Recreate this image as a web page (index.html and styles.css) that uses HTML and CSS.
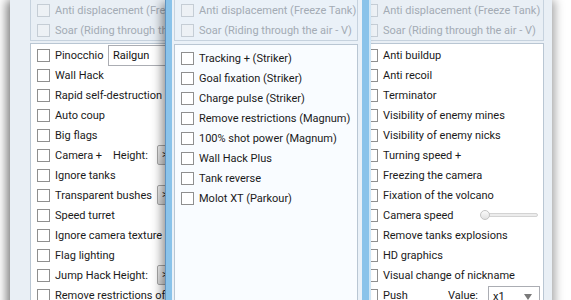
FILE: index.html
```html
<!DOCTYPE html>
<html lang="en">
<head>
    <meta charset="UTF-8">
    <title>Options</title>
    <link rel="stylesheet" href="styles.css">
</head>
<body>
    <div class="desk">
        <div class="win win-left">
            <div class="grp">
                <div class="row off"><span class="chk"></span>Anti displacement (Freeze Tank)</div>
                <div class="row off"><span class="chk"></span>Soar (Riding through the air - V)</div>
            </div>
            <div class="list">
                <div class="row"><span class="chk"></span><span class="t-pin">Pinocchio</span><span class="combo combo-rail">Railgun</span></div>
                <div class="row"><span class="chk"></span>Wall Hack</div>
                <div class="row"><span class="chk"></span>Rapid self-destruction</div>
                <div class="row"><span class="chk"></span>Auto coup</div>
                <div class="row"><span class="chk"></span>Big flags</div>
                <div class="row"><span class="chk"></span><span class="t-cam">Camera +</span><span class="t-h">Height:</span><span class="spin">&gt;</span></div>
                <div class="row"><span class="chk"></span>Ignore tanks</div>
                <div class="row"><span class="chk"></span><span class="t-bush">Transparent bushes</span><span class="spin">&gt;</span></div>
                <div class="row"><span class="chk"></span>Speed turret</div>
                <div class="row"><span class="chk"></span>Ignore camera texture</div>
                <div class="row"><span class="chk"></span>Flag lighting</div>
                <div class="row"><span class="chk"></span><span class="t-cam">Jump Hack</span><span class="t-h">Height:</span><span class="spin">&gt;</span></div>
                <div class="row"><span class="chk"></span>Remove restrictions of</div>
            </div>
        </div>

        <div class="win win-right">
            <div class="grp">
                <div class="row off"><span class="chk"></span>Anti displacement (Freeze Tank)</div>
                <div class="row off"><span class="chk"></span>Soar (Riding through the air - V)</div>
            </div>
            <div class="list">
                <div class="row"><span class="chk"></span>Anti buildup</div>
                <div class="row"><span class="chk"></span>Anti recoil</div>
                <div class="row"><span class="chk"></span>Terminator</div>
                <div class="row"><span class="chk"></span>Visibility of enemy mines</div>
                <div class="row"><span class="chk"></span>Visibility of enemy nicks</div>
                <div class="row"><span class="chk"></span>Turning speed +</div>
                <div class="row"><span class="chk"></span>Freezing the camera</div>
                <div class="row"><span class="chk"></span>Fixation of the volcano</div>
                <div class="row"><span class="chk"></span><span class="t-speed">Camera speed</span><span class="slider"><span class="track"></span><span class="thumb"></span></span></div>
                <div class="row"><span class="chk"></span>Remove tanks explosions</div>
                <div class="row"><span class="chk"></span>HD graphics</div>
                <div class="row"><span class="chk"></span>Visual change of nickname</div>
                <div class="row"><span class="chk"></span><span class="t-push">Push</span><span class="t-val">Value:</span><span class="combo combo-val">x1<span class="arrow"></span></span></div>
            </div>
        </div>

        <div class="win win-mid">
            <div class="grp">
                <div class="row off"><span class="chk"></span>Anti displacement (Freeze Tank)</div>
                <div class="row off"><span class="chk"></span>Soar (Riding through the air - V)</div>
            </div>
            <div class="list">
                <div class="row"><span class="chk"></span>Tracking + (Striker)</div>
                <div class="row"><span class="chk"></span>Goal fixation (Striker)</div>
                <div class="row"><span class="chk"></span>Charge pulse (Striker)</div>
                <div class="row"><span class="chk"></span>Remove restrictions (Magnum)</div>
                <div class="row"><span class="chk"></span>100% shot power (Magnum)</div>
                <div class="row"><span class="chk"></span>Wall Hack Plus</div>
                <div class="row"><span class="chk"></span>Tank reverse</div>
                <div class="row"><span class="chk"></span>Molot XT (Parkour)</div>
            </div>
        </div>
    </div>
</body>
</html>
```

FILE: styles.css
```css
body {
    margin: 0;
    background: #fff;
    font-family: Roboto, "Liberation Sans", sans-serif;
    font-size: 11px;
    color: #1a1a1a;
}
.desk {
    position: relative;
    width: 571px;
    height: 300px;
    overflow: hidden;
}
.win {
    position: absolute;
    top: 0;
    height: 330px;
    box-sizing: border-box;
    display: flex;
    flex-direction: column;
    background: #e9eff5;
}
.win-left {
    left: 10px;
    width: 160px;
    padding-left: 20px;
    overflow: hidden;
    box-shadow: -3px 0 10px rgba(0, 0, 0, 0.55);
}
.win-right {
    left: 340px;
    width: 212px;
    padding-left: 18px;
    padding-right: 8px;
    box-shadow: 3px 0 9px rgba(0, 0, 0, 0.35);
}
.win-mid {
    left: 165px;
    width: 206px;
    z-index: 2;
    padding-left: 9px;
    padding-right: 13px;
    background: linear-gradient(to right,
        #5f93c0 0 1px, #8ac3ea 1px 7px, #eaf1f8 7px calc(100% - 9px),
        #8ac3ea calc(100% - 9px) calc(100% - 2px), #cfe6f6 calc(100% - 2px));
    box-shadow: -6px 0 10px -3px rgba(0, 0, 0, 0.45);
}
.grp {
    flex: none;
    height: 40px;
    padding-left: 6px;
    border: 1px solid #c6d2de;
    border-top: 0;
}
.list {
    flex: 1;
    margin-top: 2px;
    padding: 1px 0 0 6px;
    background: #fff;
    border: 1px solid #b9c6d3;
}
.win-left .grp,
.win-left .list {
    border-right: 0;
}
.win-mid .list {
    margin-top: 3px;
    padding-top: 3px;
    background: #f9fcff;
}
.row {
    display: flex;
    align-items: center;
    height: 20px;
    white-space: nowrap;
}
.chk {
    flex: none;
    width: 13px;
    height: 13px;
    box-sizing: border-box;
    margin-right: 5px;
    border: 1px solid #8f8f8f;
    background: #fff;
}
.off {
    color: #a3abb4;
}
.off .chk {
    border-color: #c5cdd5;
    background: #edf1f5;
}
.t-pin, .t-cam, .t-h, .t-bush, .t-speed, .t-push, .t-val {
    flex: none;
}
.t-pin { width: 53px; }
.t-cam { width: 58px; }
.t-h { width: 44px; }
.t-bush { width: 102px; }
.t-speed { width: 97px; }
.t-push { width: 65px; }
.t-val { width: 40px; }
.combo {
    position: relative;
    flex: none;
    box-sizing: border-box;
    height: 21px;
    line-height: 19px;
    padding-left: 4px;
    border: 1px solid #abadb3;
    background: #fff;
    color: #111;
}
.combo-rail {
    width: 80px;
}
.combo-val {
    width: 52px;
    height: 22px;
    margin-top: 3px;
}
.arrow {
    position: absolute;
    right: 7px;
    top: 7px;
    border-left: 4px solid transparent;
    border-right: 4px solid transparent;
    border-top: 6px solid #7a7a7a;
}
.spin {
    flex: none;
    box-sizing: border-box;
    width: 24px;
    height: 20px;
    line-height: 18px;
    padding-left: 4px;
    border: 1px solid #a9a9a9;
    border-radius: 2px;
    background: linear-gradient(#f4f4f4, #dcdcdc);
    font-size: 10px;
}
.slider {
    position: relative;
    flex: none;
    width: 58px;
    height: 10px;
}
.track {
    position: absolute;
    left: 4px;
    right: 0;
    top: 3px;
    height: 4px;
    border: 1px solid #d3d3d3;
    border-radius: 3px;
    background: #ececec;
    box-sizing: border-box;
}
.thumb {
    position: absolute;
    left: 0;
    top: 0;
    width: 10px;
    height: 10px;
    box-sizing: border-box;
    border: 1px solid #c4c4c4;
    border-radius: 50%;
    background: linear-gradient(#fafafa, #e2e2e2);
}
```
